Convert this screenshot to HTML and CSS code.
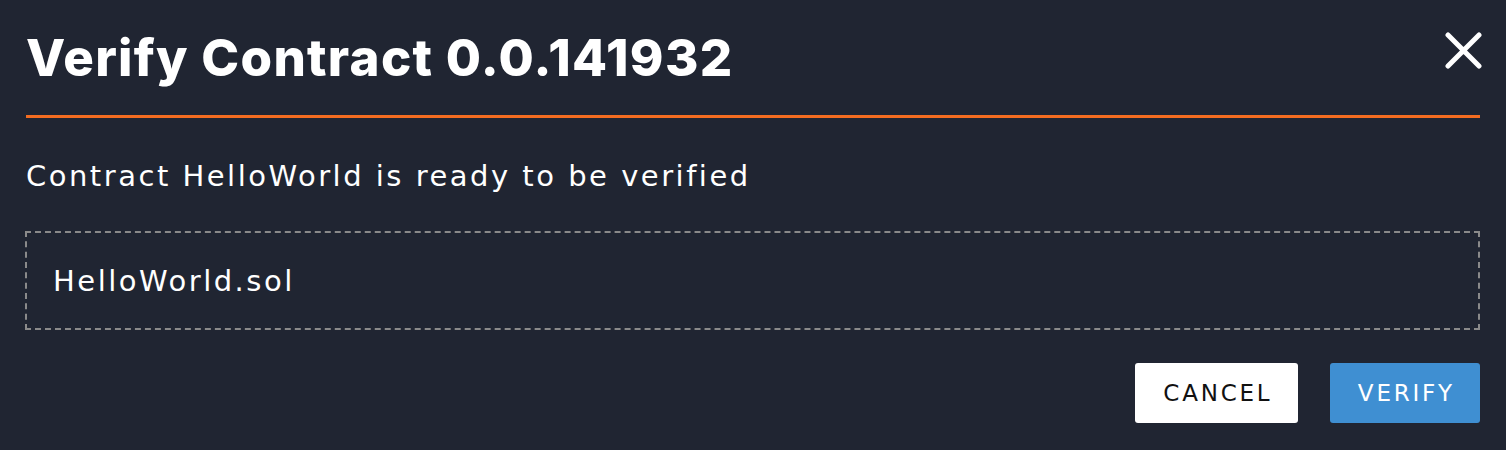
FILE: index.html
```html
<!DOCTYPE html>
<html>
<head>
<meta charset="utf-8">
<link rel="stylesheet" href="styles.css">
</head>
<body>
<div class="dialog">
  <div class="header">
    <h1 class="title">Verify Contract 0.0.141932</h1>
    <button class="close" aria-label="Close">
      <svg width="37" height="37" viewBox="0 0 37 37"><path d="M3 3 L34 34 M34 3 L3 34" stroke="#fff" stroke-width="5" stroke-linecap="round" fill="none"/></svg>
    </button>
  </div>
  <div class="divider"></div>
  <p class="message">Contract HelloWorld is ready to be verified</p>
  <div class="filebox">HelloWorld.sol</div>
  <div class="actions">
    <button class="btn btn-cancel">CANCEL</button>
    <button class="btn btn-verify">VERIFY</button>
  </div>
</div>
</body>
</html>
```
FILE: styles.css
```css
html, body {
  margin: 0;
  padding: 0;
  background: #202532;
}
body {
  font-family: "DejaVu Sans", sans-serif;
  color: #fff;
}
.dialog {
  padding: 0 26px 0 26px;
}
.header {
  display: flex;
  justify-content: space-between;
  align-items: center;
  height: 115px;
}
.title {
  margin: 0;
  font-family: Inter, sans-serif;
  font-weight: 800;
  font-size: 51px;
  line-height: 1;
  letter-spacing: 1.3px;
}
.close {
  background: none;
  border: 0;
  padding: 0;
  margin-right: -2px;
  display: flex;
  margin-top: -14px;
}
.divider {
  height: 3px;
  background: #f36c21;
}
.message {
  margin: 0;
  padding-top: 38px;
  font-size: 29px;
  line-height: 40px;
  letter-spacing: 2.5px;
}
.filebox {
  margin-top: 35px;
  border: 2px dashed #8a8a8a;
  height: 99px;
  box-sizing: border-box;
  margin-left: -1px;
  padding-left: 26px;
  display: flex;
  align-items: center;
  font-size: 29px;
  letter-spacing: 2.5px;
}
.actions {
  display: flex;
  justify-content: flex-end;
  gap: 32px;
  margin-top: 33px;
}
.btn {
  height: 60px;
  border: 0;
  border-radius: 3px;
  font-family: "DejaVu Sans", sans-serif;
  font-size: 23px;
  letter-spacing: 2.8px;
  padding: 0 0 0 2.8px;
}
.btn-cancel {
  width: 163px;
  background: #fff;
  color: #111;
}
.btn-verify {
  width: 150px;
  background: #3f8fd2;
  color: #fff;
}
```
